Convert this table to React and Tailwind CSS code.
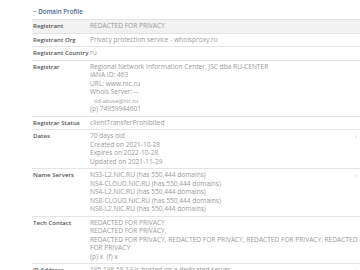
import React from 'react'

const ROWS = [
  { label: 'Registrant', lines: ['REDACTED FOR PRIVACY'], shade: true },
  { label: 'Registrant Org', lines: ['Privacy protection service - whoisproxy.ru'] },
  { label: 'Registrant Country', lines: ['ru'] },
  {
    label: 'Registrar',
    lines: [
      'Regional Network Information Center, JSC dba RU-CENTER',
      'IANA ID: 463',
      'URL: www.nic.ru',
      'Whois Server: --',
      { text: 'tld-abuse@nic.ru', small: true },
      '(p) 74959944601',
    ],
  },
  { label: 'Registrar Status', lines: ['clientTransferProhibited'] },
  {
    label: 'Dates',
    lines: ['70 days old', 'Created on 2021-10-28', 'Expires on 2022-10-28', 'Updated on 2021-11-29'],
    mark: true,
  },
  {
    label: 'Name Servers',
    lines: [
      'NS3-L2.NIC.RU (has 550,444 domains)',
      'NS4-CLOUD.NIC.RU (has 550,444 domains)',
      'NS4-L2.NIC.RU (has 550,444 domains)',
      'NS8-CLOUD.NIC.RU (has 550,444 domains)',
      'NS8-L2.NIC.RU (has 550,444 domains)',
    ],
    mark: true,
  },
  {
    label: 'Tech Contact',
    lines: [
      'REDACTED FOR PRIVACY',
      'REDACTED FOR PRIVACY,',
      'REDACTED FOR PRIVACY, REDACTED FOR PRIVACY, REDACTED FOR PRIVACY, REDACTED',
      'FOR PRIVACY',
      '(p) x  (f) x',
    ],
  },
  { label: 'IP Address', lines: ['185.198.58.13 is hosted on a dedicated server'], mark: true },
]

export default function App() {
  return (
    <div className="w-[360px] h-[270px] overflow-hidden bg-white font-['Open_Sans','Liberation_Sans',sans-serif]">
      <div className="pl-[32px] pt-[7px] w-[390px]">
        <div className="text-[6.2px] leading-[10px] font-semibold text-[#4a6b8e] pl-[1px] mb-[2px]">
          − Domain Profile
        </div>

        {/* profile table */}
        <div className="border-b border-[#e4e4e4]">
          {ROWS.map(row => (
            <div
              key={row.label}
              className={`relative grid grid-cols-[58px_1fr] border-t border-[#e4e4e4] py-[2px] leading-[8.5px]
                ${row.shade ? 'bg-[#f1f1f1]' : 'bg-white'}`}
            >
              <div className="pl-[1px] font-semibold text-[6.1px] text-[#555] whitespace-nowrap">{row.label}</div>
              <div className="text-[6.6px] text-[#9a9a9a] pr-[6px]">
                {row.lines.map((l, i) =>
                  typeof l === 'string' ? (
                    <div key={i} className="whitespace-pre">{l}</div>
                  ) : (
                    <div key={i} className="pl-[4px] text-[5.6px]">{l.text}</div>
                  )
                )}
              </div>
              {row.mark && (
                <div className="absolute left-[323px] top-[5px] w-[2px] h-[4px] rounded-[1px] bg-[#f4f1e8]" />
              )}
            </div>
          ))}
        </div>
      </div>
    </div>
  )
}
